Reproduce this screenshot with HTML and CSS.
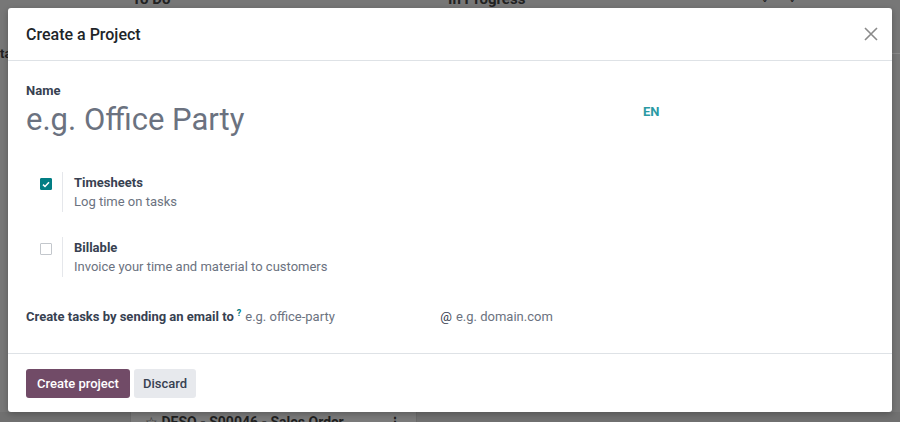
FILE: index.html
```html
<!DOCTYPE html>
<html>
<head>
<meta charset="utf-8">
<link rel="stylesheet" href="styles.css">
</head>
<body>
<div class="page">
  <div class="kanban-head">
    <div class="col-head col-todo"><span class="col-title">To Do</span></div>
    <div class="col-head col-prog"><span class="col-title">In Progress</span></div>
    <div class="col-head col-more"><span class="arrows">‹›</span><span class="arrows">‹›</span></div>
  </div>
  <div class="side-row"><span class="side-text">ta</span><span class="side-line"></span></div>
  <div class="bottom-row">
    <div class="card-bg"><span class="star">☆</span> DESO - S00046 - Sales Order<span class="dots">⋮</span></div>
  </div>
</div>

<div class="modal">
  <header class="modal-header">
    <h4 class="modal-title">Create a Project</h4>
    <button class="close" aria-label="Close">
      <svg width="14" height="14" viewBox="0 0 14 14"><path d="M1 1L13 13M13 1L1 13" stroke="#8a8a8a" stroke-width="1.6" fill="none"/></svg>
    </button>
  </header>
  <main class="modal-body">
    <div class="name-row">
      <div class="name-field">
        <label class="field-label">Name</label>
        <div class="name-input">e.g. Office Party</div>
      </div>
      <span class="lang">EN</span>
    </div>
    <div class="options">
      <div class="option">
        <span class="check checked">
          <svg width="8" height="7" viewBox="0 0 8 7"><path d="M1 3.6L3 5.5L7 1.2" stroke="#fff" stroke-width="1.5" fill="none"/></svg>
        </span>
        <div class="opt-text">
          <div class="opt-title">Timesheets</div>
          <div class="opt-desc">Log time on tasks</div>
        </div>
      </div>
      <div class="option">
        <span class="check"></span>
        <div class="opt-text">
          <div class="opt-title">Billable</div>
          <div class="opt-desc">Invoice your time and material to customers</div>
        </div>
      </div>
    </div>
    <div class="email-row">
      <span class="email-label">Create tasks by sending an email to<sup class="help">?</sup></span>
      <span class="alias-input">e.g. office-party</span>
      <span class="at">@</span>
      <span class="domain">e.g. domain.com</span>
    </div>
  </main>
  <footer class="modal-footer">
    <button class="btn btn-primary">Create project</button>
    <button class="btn btn-secondary">Discard</button>
  </footer>
</div>
</body>
</html>
```

FILE: styles.css
```css
* { box-sizing: border-box; }
html, body { margin: 0; padding: 0; }
body {
  width: 900px;
  height: 422px;
  overflow: hidden;
  background: #777777;
  font-family: Roboto, "Noto Sans", sans-serif;
  color: #3b4148;
  position: relative;
}
.page { height: 422px; display: flex; flex-direction: column; }
.kanban-head {
  display: flex;
  height: 14px;
  margin-top: -8px;
  font-weight: 700;
  font-size: 15px;
  color: #222;
}
.col-head { display: flex; align-items: center; }
.col-todo { width: 410px; padding-left: 132px; }
.col-prog { width: 320px; padding-left: 38px; }
.col-more { flex: 1; gap: 24px; padding-left: 32px; }
.arrows { font-size: 12px; letter-spacing: -2px; }
.side-row { display: flex; align-items: center; margin-top: 40px; height: 14px; }
.side-text { font-size: 13px; font-weight: 700; color: #222; }
.side-line { flex: 1; height: 1px; background: #8a8a8a; }
.bottom-row { margin-top: auto; height: 10px; display: flex; background: #707070; }
.card-bg {
  margin-left: 130px;
  width: 287px;
  background: #7a7a7a;
  border-left: 1px solid #6a6a6a;
  border-right: 1px solid #6a6a6a;
  padding: 3px 0 0 14px;
  font-size: 14px;
  font-weight: 700;
  color: #1f1f1f;
  line-height: 14px;
  position: relative;
}
.star { font-weight: 400; }
.dots { position: absolute; right: 14px; top: 3px; }

.modal {
  position: absolute;
  left: 8px;
  top: 8px;
  width: 884px;
  height: 404px;
  background: #fff;
  border-radius: 3px;
  box-shadow: 0 2px 6px rgba(0,0,0,0.25);
  display: flex;
  flex-direction: column;
}
.modal-header {
  height: 53px;
  border-bottom: 1px solid #dee2e6;
  display: flex;
  align-items: center;
  justify-content: space-between;
  padding: 0 14px 0 18px;
}
.modal-title {
  margin: 0;
  font-size: 16px;
  font-weight: 500;
  color: #212529;
}
.close {
  border: 0;
  background: none;
  padding: 0;
  width: 14px;
  height: 14px;
  display: flex;
  cursor: pointer;
}
.modal-body {
  flex: 1;
  padding: 20px 18px 0 18px;
  display: flex;
  flex-direction: column;
}
.name-row { display: flex; align-items: flex-start; }
.name-field { width: 617px; }
.field-label { display: block; font-size: 13px; font-weight: 700; color: #374151; line-height: 20px; }
.name-input { font-size: 31px; line-height: 38px; color: #6b7280; margin-top: 0; }
.lang { font-size: 13px; font-weight: 700; color: #2a9aa4; margin-top: 23px; }
.options { display: flex; flex-direction: column; gap: 26px; margin-top: 34px; padding-left: 14px; }
.option { display: flex; align-items: flex-start; }
.check {
  width: 12px; height: 12px;
  margin-top: 5px;
  border: 1px solid #c3c7cc;
  border-radius: 1px;
  background: #fff;
  display: flex; align-items: center; justify-content: center;
}
.check.checked { background: #017e84; border-color: #017e84; }
.opt-text {
  margin-left: 10px;
  margin-top: -1px;
  border-left: 1px solid #e5e7eb;
  padding: 1px 0 1px 11px;
  font-size: 13px;
  line-height: 19px;
}
.opt-title { font-weight: 700; color: #374151; }
.opt-desc { color: #6b7280; }
.email-row { display: flex; align-items: baseline; margin-top: 30px; font-size: 13px; line-height: 20px; }
.email-label { font-weight: 700; color: #374151; }
.help { color: #017e84; font-size: 9px; font-weight: 700; margin-left: 3px; vertical-align: 5px; line-height: 0; }
.alias-input { width: 195px; margin-left: 4px; color: #6b7280; }
.at { color: #374151; margin-right: 4px; }
.domain { color: #6b7280; }
.modal-footer {
  border-top: 1px solid #dee2e6;
  height: 59px;
  display: flex;
  align-items: flex-start;
  padding: 15px 18px 0;
  gap: 4px;
}
.btn {
  height: 29px;
  border: 0;
  border-radius: 3px;
  font-family: inherit;
  font-size: 13px;
  font-weight: 500;
  padding: 0 11px;
}
.btn-primary { background: #714b67; color: #fff; }
.btn-secondary { background: #e7e9ed; color: #374151; padding: 0 9px; }
```
